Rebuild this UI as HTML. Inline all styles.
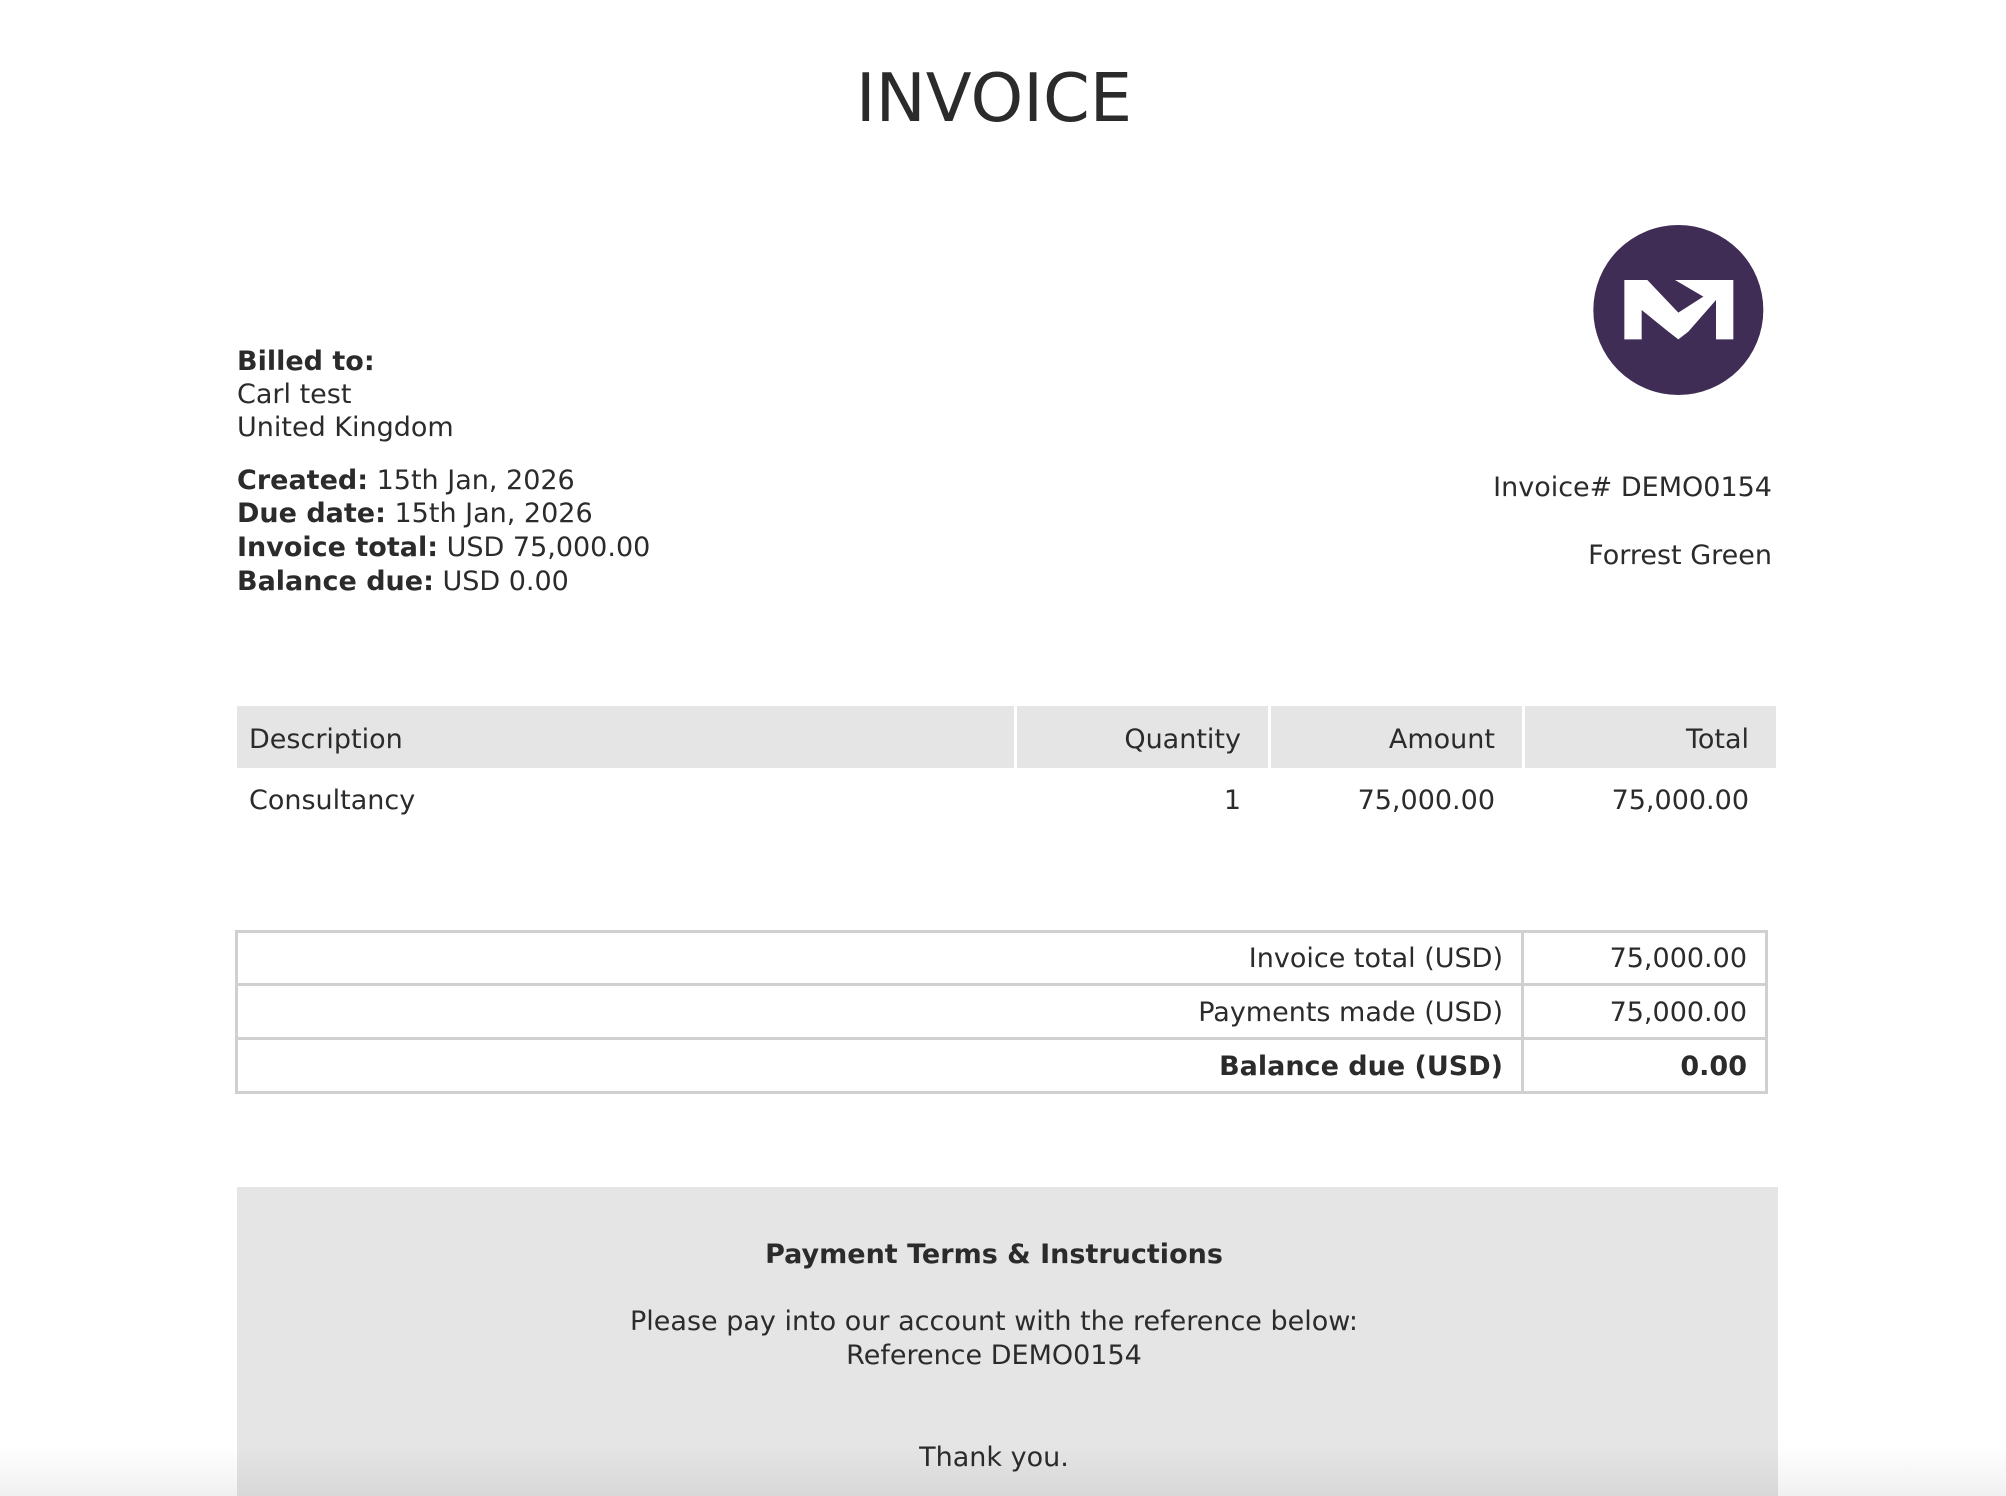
<!DOCTYPE html>
<html><head><meta charset="utf-8"><style>
*{margin:0;padding:0;box-sizing:border-box}
html,body{width:2006px;height:1496px;overflow:hidden}
body{background:#fff;position:relative;font-family:"DejaVu Sans","Liberation Sans",sans-serif;color:#2b2b2b;font-size:27px}
.a{position:absolute;white-space:nowrap;line-height:1}
b{font-weight:bold}
.r{text-align:right}
</style></head><body>
<div class="a" style="left:0;width:1988px;text-align:center;top:65px;font-size:67px">INVOICE</div>

<svg style="position:absolute;left:1560px;top:200px" width="220" height="220" viewBox="0 0 660 660">
<circle cx="355" cy="330" r="255" fill="#3f2d56"/>
<polygon fill="#fff" points="193,240 262,240 355,338 430,290 345,240 520,240 520,418 468,418 468,300 385,395 355,418 325,395 245,330 245,418 193,418"/>
</svg>

<div class="a" style="left:237px;top:348px"><b>Billed to:</b></div>
<div class="a" style="left:237px;top:381px">Carl test</div>
<div class="a" style="left:237px;top:414px">United Kingdom</div>
<div class="a" style="left:237px;top:467px"><b>Created:</b> 15th Jan, 2026</div>
<div class="a" style="left:237px;top:500px"><b>Due date:</b> 15th Jan, 2026</div>
<div class="a" style="left:237px;top:534px"><b>Invoice total:</b> USD 75,000.00</div>
<div class="a" style="left:237px;top:568px"><b>Balance due:</b> USD 0.00</div>

<div class="a r" style="right:234px;top:474px">Invoice# DEMO0154</div>
<div class="a r" style="right:234px;top:542px">Forrest Green</div>

<div style="position:absolute;left:237px;top:706px;width:777px;height:62px;background:#e6e5e6"></div>
<div style="position:absolute;left:1017px;top:706px;width:251px;height:62px;background:#e6e5e6"></div>
<div style="position:absolute;left:1271px;top:706px;width:251px;height:62px;background:#e6e5e6"></div>
<div style="position:absolute;left:1525px;top:706px;width:251px;height:62px;background:#e6e5e6"></div>
<div class="a" style="left:249px;top:726px">Description</div>
<div class="a r" style="right:765px;top:726px">Quantity</div>
<div class="a r" style="right:511px;top:726px">Amount</div>
<div class="a r" style="right:257px;top:726px">Total</div>
<div class="a" style="left:249px;top:787px">Consultancy</div>
<div class="a r" style="right:765px;top:787px">1</div>
<div class="a r" style="right:511px;top:787px">75,000.00</div>
<div class="a r" style="right:257px;top:787px">75,000.00</div>

<div style="position:absolute;left:235px;top:930px;width:1533px;height:164px;border:3px solid #d0d0d0"></div>
<div style="position:absolute;left:235px;top:983px;width:1533px;height:3px;background:#d0d0d0"></div>
<div style="position:absolute;left:235px;top:1037px;width:1533px;height:3px;background:#d0d0d0"></div>
<div style="position:absolute;left:1521px;top:930px;width:3px;height:164px;background:#d0d0d0"></div>
<div class="a r" style="right:503px;top:945px">Invoice total (USD)</div>
<div class="a r" style="right:259px;top:945px">75,000.00</div>
<div class="a r" style="right:503px;top:999px">Payments made (USD)</div>
<div class="a r" style="right:259px;top:999px">75,000.00</div>
<div class="a r" style="right:503px;top:1053px"><b>Balance due (USD)</b></div>
<div class="a r" style="right:259px;top:1053px"><b>0.00</b></div>

<div style="position:absolute;left:237px;top:1187px;width:1541px;height:309px;background:#e6e5e6"></div>
<div class="a" style="left:237px;width:1514px;text-align:center;top:1241px"><b>Payment Terms &amp; Instructions</b></div>
<div class="a" style="left:237px;width:1514px;text-align:center;top:1308px">Please pay into our account with the reference below:</div>
<div class="a" style="left:237px;width:1514px;text-align:center;top:1342px">Reference DEMO0154</div>
<div class="a" style="left:237px;width:1514px;text-align:center;top:1444px">Thank you.</div>
<div style="position:absolute;left:0;top:1446px;width:2006px;height:50px;background:linear-gradient(rgba(0,0,0,0),rgba(0,0,0,0.06))"></div>
</body></html>
